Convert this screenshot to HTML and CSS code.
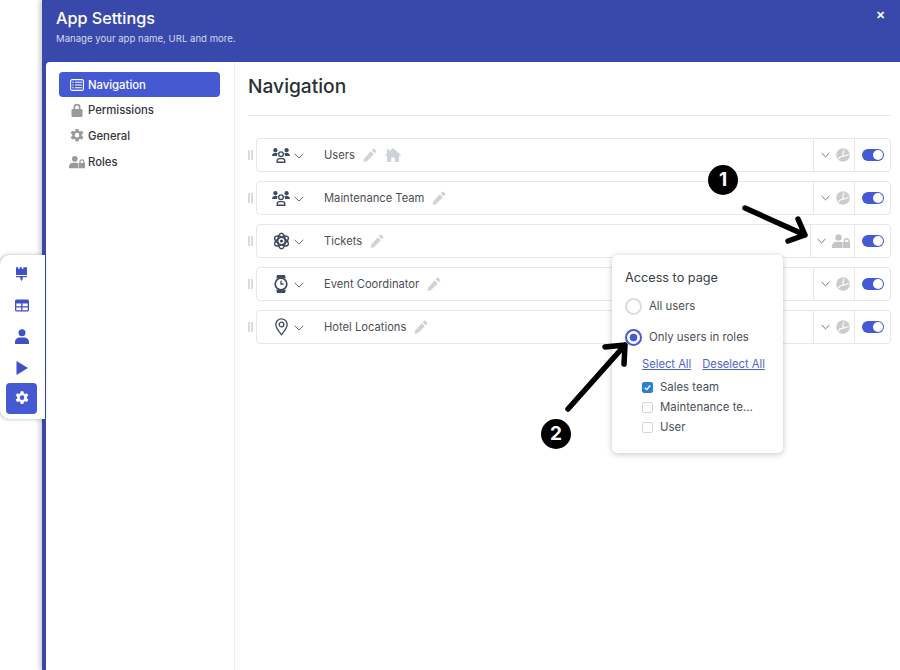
FILE: index.html
```html
<!DOCTYPE html>
<html lang="en">
<head>
<meta charset="utf-8">
<title>App Settings</title>
<link rel="stylesheet" href="styles.css">
</head>
<body>
<svg class="defs" width="0" height="0" aria-hidden="true">
  <defs>
    <symbol id="i-pencil" viewBox="0 0 16 16"><path d="M11.400 1.100a1.300 1.300 0 0 1 1.800 0l1.700 1.700a1.300 1.300 0 0 1 0 1.800l-1.500 1.500-3.500-3.500zM8.900 3.600l3.500 3.500-7.900 7.900-3.900.9.900-4z" fill="currentColor"/></symbol>
    <symbol id="i-team" viewBox="0 0 18 15"><g fill="currentColor"><circle cx="3.400" cy="2.200" r="2.100"/><circle cx="14.600" cy="2.200" r="2.100"/><path d="M0 8c0-2 1.400-3.300 3.400-3.300 1 0 1.800.2 2.400.7A4 4 0 0 0 5 7.600V8zM18 8c0-2-1.400-3.300-3.400-3.300-1 0-1.800.2-2.400.7.500.5.800 1.200.800 2.200V8z"/></g><g fill="none" stroke="currentColor" stroke-width="1.400"><circle cx="9" cy="6.200" r="2.300"/><path d="M5.200 14.300v-1.500c0-1.300 1-2.200 2.300-2.200h3c1.300 0 2.300.9 2.300 2.200v1.500z"/></g></symbol>
    <symbol id="i-chev" viewBox="0 0 10 6"><path d="M.7.800 5 5 9.300.8" fill="none" stroke="currentColor" stroke-width="1"/></symbol>
    <symbol id="i-globe" viewBox="0 0 14 14"><circle cx="7" cy="7" r="6.800" fill="currentColor"/><path d="M2.200 11.200C3.500 8.600 5 8.300 6.800 8.300c1.800 0 3.400-1 5.800-1.800M7.400 1.600C8.700 3 7.200 4.400 6.800 5.600c-.3 1 .4 1.800 1.400 2" fill="none" stroke="#fff" stroke-width="1.100"/></symbol>
    <symbol id="i-userlock" viewBox="0 0 18 14"><g fill="currentColor"><circle cx="6.500" cy="3.400" r="3.200"/><path d="M0 14v-1.800C0 9.600 2 7.800 4.600 7.800h3.800c.8 0 1.500.2 2.100.5V14z"/><path fill-rule="evenodd" d="M11 8h.7V6.800a2.800 2.800 0 0 1 5.600 0V8h.7v6h-7zm2-1.100V8h3V6.900a1.500 1.500 0 0 0-3 0z"/></g></symbol>
    <symbol id="i-gear" viewBox="0 0 16 16"><path fill="currentColor" fill-rule="evenodd" d="M6.700.5h2.600l.4 2 1.100.6 2-.7 1.300 2.300-1.500 1.300v1.300l1.500 1.400-1.300 2.200-2-.6-1.100.6-.4 2H6.700l-.4-2-1.100-.6-2 .6-1.300-2.200L3.400 7.300V6L1.900 4.700l1.300-2.300 2 .7 1.100-.6zM8 4.500a2.200 2.200 0 1 0 0 4.400 2.200 2.200 0 0 0 0-4.400z" transform="translate(-1.400 -.9) scale(1.180)"/></symbol>
  </defs>
</svg>

<div class="app">
  <section class="modal">
    <header class="modal-head">
      <div>
        <h1 class="modal-title">App Settings</h1>
        <p class="modal-sub">Manage your app name, URL and more.</p>
      </div>
      <span class="close">✕</span>
    </header>
    <div class="modal-body">
      <nav class="side">
        <a class="side-item active">
          <svg class="side-icon" viewBox="0 0 14 12"><rect x=".6" y=".6" width="12.800" height="10.800" rx="1.500" fill="none" stroke="currentColor" stroke-width="1.100"/><path d="M2.300 3.200h1.500M2.300 6h1.500M2.300 8.800h1.500M5 3.200h6.800M5 6h6.800M5 8.800h6.800" stroke="currentColor" stroke-width="1.100"/></svg>
          Navigation
        </a>
        <a class="side-item">
          <svg class="side-icon grey" viewBox="0 0 14 14"><path fill="currentColor" d="M3.500 6V4.300a3.500 3.500 0 0 1 7 0V6h.7c.7 0 1.300.6 1.300 1.300v5.400c0 .7-.6 1.300-1.300 1.300H2.800c-.7 0-1.300-.6-1.300-1.300V7.300C1.500 6.600 2.100 6 2.800 6zm1.700 0h3.600V4.300a1.800 1.800 0 0 0-3.600 0z"/></svg>
          Permissions
        </a>
        <a class="side-item">
          <svg class="side-icon grey"><use href="#i-gear"/></svg>
          General
        </a>
        <a class="side-item">
          <svg class="side-icon grey wide"><use href="#i-userlock"/></svg>
          Roles
        </a>
      </nav>
      <main class="main">
        <h2 class="main-title">Navigation</h2>
        <div class="rows">
          <div class="row-wrap">
            <span class="grip"></span>
            <div class="row">
              <span class="row-icon"><svg class="ico-team"><use href="#i-team"/></svg></span>
              <svg class="chev"><use href="#i-chev"/></svg>
              <span class="row-name">Users</span>
              <svg class="pencil"><use href="#i-pencil"/></svg>
              <svg class="home" viewBox="0 0 16 14"><path fill="currentColor" d="M8 0 16 7l-.8.9L14 7v7H9.700V9.500H6.300V14H2V7L.8 7.900 0 7 2 5.200V1.300h2v2.100z"/></svg>
              <span class="row-access"><svg class="chev-sm"><use href="#i-chev"/></svg><svg class="globe"><use href="#i-globe"/></svg></span>
              <span class="row-toggle"><span class="toggle"></span></span>
            </div>
          </div>
          <div class="row-wrap">
            <span class="grip"></span>
            <div class="row">
              <span class="row-icon"><svg class="ico-team"><use href="#i-team"/></svg></span>
              <svg class="chev"><use href="#i-chev"/></svg>
              <span class="row-name">Maintenance Team</span>
              <svg class="pencil"><use href="#i-pencil"/></svg>
              <span class="row-access"><svg class="chev-sm"><use href="#i-chev"/></svg><svg class="globe"><use href="#i-globe"/></svg></span>
              <span class="row-toggle"><span class="toggle"></span></span>
            </div>
          </div>
          <div class="row-wrap">
            <span class="grip"></span>
            <div class="row">
              <span class="row-icon"><svg class="ico-atom" viewBox="0 0 16 16"><g fill="none" stroke="currentColor" stroke-width="1.400"><ellipse cx="8" cy="8" rx="3.500" ry="7.300"/><ellipse cx="8" cy="8" rx="3.500" ry="7.300" transform="rotate(60 8 8)"/><ellipse cx="8" cy="8" rx="3.500" ry="7.300" transform="rotate(120 8 8)"/></g><circle cx="8" cy="8" r="1.500" fill="currentColor"/></svg></span>
              <svg class="chev"><use href="#i-chev"/></svg>
              <span class="row-name">Tickets</span>
              <svg class="pencil"><use href="#i-pencil"/></svg>
              <span class="row-access wide"><svg class="chev-sm"><use href="#i-chev"/></svg><svg class="userlock"><use href="#i-userlock"/></svg></span>
              <span class="row-toggle"><span class="toggle"></span></span>
            </div>
          </div>
          <div class="row-wrap">
            <span class="grip"></span>
            <div class="row">
              <span class="row-icon"><svg class="ico-watch" viewBox="0 0 14 18"><path fill="currentColor" d="M3 0h8l.8 3.200H2.200zM3 18h8l.8-3.200H2.200z"/><circle cx="7" cy="9" r="5.800" fill="none" stroke="currentColor" stroke-width="1.700"/><path d="M7 5.800V9h2.600" fill="none" stroke="currentColor" stroke-width="1.300"/></svg></span>
              <svg class="chev"><use href="#i-chev"/></svg>
              <span class="row-name">Event Coordinator</span>
              <svg class="pencil"><use href="#i-pencil"/></svg>
              <span class="row-access"><svg class="chev-sm"><use href="#i-chev"/></svg><svg class="globe"><use href="#i-globe"/></svg></span>
              <span class="row-toggle"><span class="toggle"></span></span>
            </div>
          </div>
          <div class="row-wrap">
            <span class="grip"></span>
            <div class="row">
              <span class="row-icon"><svg class="ico-pin" viewBox="0 0 13 18"><path fill="none" stroke="currentColor" stroke-width="1.300" d="M6.500 16.800C3.500 13 .8 9.800.8 6.500a5.700 5.700 0 0 1 11.400 0c0 3.300-2.700 6.500-5.700 10.300z"/><circle cx="6.500" cy="6.500" r="2.300" fill="none" stroke="currentColor" stroke-width="1.300"/></svg></span>
              <svg class="chev"><use href="#i-chev"/></svg>
              <span class="row-name">Hotel Locations</span>
              <svg class="pencil"><use href="#i-pencil"/></svg>
              <span class="row-access"><svg class="chev-sm"><use href="#i-chev"/></svg><svg class="globe"><use href="#i-globe"/></svg></span>
              <span class="row-toggle"><span class="toggle"></span></span>
            </div>
          </div>
        </div>
      </main>
    </div>
  </section>

  <aside class="rail">
    <span class="rail-btn"><svg class="rail-brush" viewBox="0 0 12 16"><path fill="currentColor" d="M0 0h2.500v2H4V0h2.500v2H8V0h4v8.500H0zM0 9.500h12V11H7.500l-.5 2.500L6 15l-1-1.500L4.500 11H0z"/></svg></span>
    <span class="rail-btn"><svg class="rail-icon" viewBox="0 0 14 12"><path fill="currentColor" fill-rule="evenodd" d="M1.500 0h11c.8 0 1.500.7 1.500 1.500v9c0 .8-.7 1.500-1.500 1.500h-11C.7 12 0 11.300 0 10.500v-9C0 .7.700 0 1.500 0zm-.2 4v2.800h4.900V4zm6.200 0v2.800h5.200V4zm-6.200 4v2.700h4.900V8zm6.200 0v2.700h5.200V8z"/></svg></span>
    <span class="rail-btn"><svg class="rail-icon" viewBox="0 0 14 15"><circle cx="7" cy="3.800" r="3.500" fill="currentColor"/><path fill="currentColor" d="M0 15v-1.800C0 10.400 2.200 8.500 5 8.500h4c2.800 0 5 1.900 5 4.700V15z"/></svg></span>
    <span class="rail-btn"><svg class="rail-play" viewBox="0 0 12 14"><path fill="currentColor" d="M.5 0 12 7 .5 14z"/></svg></span>
    <span class="rail-btn active"><svg class="rail-icon"><use href="#i-gear"/></svg></span>
  </aside>

  <div class="pop">
    <div class="pop-title">Access to page</div>
    <label class="radio-line"><span class="radio"></span>All users</label>
    <label class="radio-line"><span class="radio on"></span>Only users in roles</label>
    <div class="pop-links"><a class="pop-link">Select All</a><a class="pop-link">Deselect All</a></div>
    <div class="check-line"><span class="check on"><svg viewBox="0 0 10 10"><path d="M2 5.200 4.200 7.300 8 2.800" fill="none" stroke="#fff" stroke-width="1.500"/></svg></span>Sales team</div>
    <div class="check-line"><span class="check"></span>Maintenance te…</div>
    <div class="check-line"><span class="check"></span>User</div>
  </div>

  <svg class="callouts" viewBox="0 0 900 670" aria-hidden="true">
    <g fill="none" stroke="#000" stroke-width="5.500" stroke-linecap="round" stroke-linejoin="round">
      <path d="M745 208 805 235M798 219 805 235 788 241"/>
      <path d="M568 409 625 345M605 347 625 345 624 364"/>
    </g>
  </svg>
  <span class="badge one">1</span>
  <span class="badge two">2</span>
</div>
</body>
</html>
```
FILE: styles.css
```css
* { box-sizing: border-box; }
html, body { margin: 0; padding: 0; }
body { font-family: "Inter", "Liberation Sans", sans-serif; color: #2b2f36; background: #fff; overflow: hidden; }
.defs { position: absolute; }
.app { position: relative; width: 900px; height: 670px; padding-left: 42px; }

.modal { height: 100%; display: flex; flex-direction: column; background: #3949ab; box-shadow: -2px 0 5px rgba(0,0,0,.22); }
.modal-head { height: 62px; flex: none; display: flex; justify-content: space-between; padding: 9px 14px 0; color: #fff; }
.modal-title { margin: 0; font-size: 16.200px; font-weight: 500; line-height: 18px; }
.modal-sub { margin: 5px 0 0; font-size: 9.600px; line-height: 13px; color: #d5d9f2; }
.close { font-size: 11px; line-height: 12px; font-weight: 700; margin-right: 1px; }

.modal-body { flex: 1; margin-left: 4px; display: flex; background: #fff; border-radius: 4px 0 0 0; }
.side { width: 189px; flex: none; border-right: 1px solid #eceef1; padding: 10px 14px 0 13px; display: flex; flex-direction: column; }
.side-item { height: 25.700px; display: flex; align-items: center; gap: 4px; padding: 1px 0 0 11px; font-size: 11.300px; font-weight: 500; color: #33373d; border-radius: 4px; }
.side-item.active { background: #4559d3; color: #fff; height: 25px; padding-top: 0; }
.side-icon { width: 14px; height: 14px; flex: none; }
.side-icon.grey { color: #9a9a9c; }
.side-icon.wide { width: 16px; margin-left: -1px; margin-right: -1px; }

.main { flex: 1; padding: 0 9px 0 13px; min-width: 0; }
.main-title { margin: 0; height: 54px; border-bottom: 1px solid #e6e7ea; font-size: 19.200px; font-weight: 500; line-height: 49px; color: #2b2f36; }
.rows { margin-top: 22px; display: flex; flex-direction: column; gap: 9px; }
.row-wrap { display: flex; align-items: center; }
.grip { width: 5px; height: 10px; margin-right: 3px; border-left: 2px solid #d9dbde; border-right: 2px solid #d9dbde; flex: none; }
.row { flex: 1; height: 34px; border: 1px solid #e6e7ea; border-radius: 4px; display: flex; align-items: center; font-size: 11.200px; color: #4a4f57; }
.row-icon { width: 48px; flex: none; display: flex; justify-content: center; color: #3f4c5e; }
.ico-team { width: 18px; height: 15px; }
.ico-atom { width: 17px; height: 18px; }
.ico-watch { width: 14px; height: 18px; }
.ico-pin { width: 13px; height: 18px; }
.chev { width: 10px; height: 6px; color: #666b73; flex: none; margin-left: -11px; margin-top: 1px; }
.row-name { margin-left: 20px; }
.pencil { width: 14px; height: 14px; color: #cfd2d7; margin-left: 8px; flex: none; }
.home { width: 16px; height: 14px; color: #cfd2d7; margin-left: 8px; flex: none; }
.row-access { margin-left: auto; width: 41px; height: 100%; flex: none; display: flex; align-items: center; gap: 6px; padding-left: 7px; border-left: 1px solid #e6e7ea; }
.row-access.wide { width: 44px; padding-left: 6px; }
.chev-sm { width: 9px; height: 6px; color: #5f646c; flex: none; }
.globe { width: 14px; height: 14px; color: #cbcccd; flex: none; }
.userlock { width: 18px; height: 14px; color: #c4c5c7; flex: none; }
.row-toggle { width: 36px; height: 100%; flex: none; display: flex; align-items: center; justify-content: center; border-left: 1px solid #e6e7ea; }
.toggle { position: relative; width: 22px; height: 12px; border-radius: 6px; background: #4559d3; }
.toggle::after { content: ""; position: absolute; right: 1px; top: 1px; width: 10px; height: 10px; border-radius: 50%; background: #fff; }

.rail { position: absolute; left: 0; top: 255px; width: 45px; height: 164px; background: #fff; border-radius: 10px 0 0 10px; box-shadow: -1px 0 4px rgba(0,0,0,.28); display: flex; flex-direction: column; align-items: flex-start; padding: 4px 0 0 6px; gap: 0; }
.rail-btn { width: 31px; height: 31px; display: flex; align-items: center; justify-content: center; color: #3f51c4; border-radius: 4px; }
.rail-btn.active { background: #4559d3; color: #fff; }
.rail-brush { width: 11px; height: 15px; }
.rail-play { width: 12px; height: 14px; }
.rail-icon { width: 14px; height: 15px; }

.pop { position: absolute; left: 612px; top: 255px; width: 171px; height: 198px; background: #fff; border-radius: 5px; box-shadow: 0 1px 6px rgba(0,0,0,.24); padding: 15px 13px; font-size: 11.400px; color: #4a4f57; }
.pop-title { font-size: 12.700px; line-height: 16px; color: #3b4048; margin-bottom: 11px; }
.radio-line { display: flex; align-items: center; gap: 7px; height: 18px; margin-bottom: 13px; }
.radio { width: 17px; height: 17px; border-radius: 50%; border: 2px solid #dcdde0; flex: none; }
.radio.on { border-color: #4559d3; background: radial-gradient(circle, #4559d3 3.500px, #fff 4.200px); }
.pop-links { display: flex; gap: 11px; padding-left: 17px; margin-top: -2px; margin-bottom: 6px; font-size: 11.200px; }
.pop-link { color: #4f63cf; text-decoration: underline; }
.check-line { display: flex; align-items: center; gap: 7px; height: 20px; padding-left: 17px; }
.check { width: 11px; height: 11px; border: 1px solid #d3d5d8; border-radius: 2px; flex: none; }
.check.on { background: #2f7fd1; border-color: #2f7fd1; display: flex; }

.callouts { position: absolute; left: 0; top: 0; width: 900px; height: 670px; pointer-events: none; }
.badge { position: absolute; width: 30px; height: 30px; border-radius: 50%; background: #000; color: #fff; font-size: 19px; font-weight: 700; line-height: 30px; text-align: center; }
.badge.one { left: 708px; top: 165px; }
.badge.two { left: 541px; top: 419px; }
```
